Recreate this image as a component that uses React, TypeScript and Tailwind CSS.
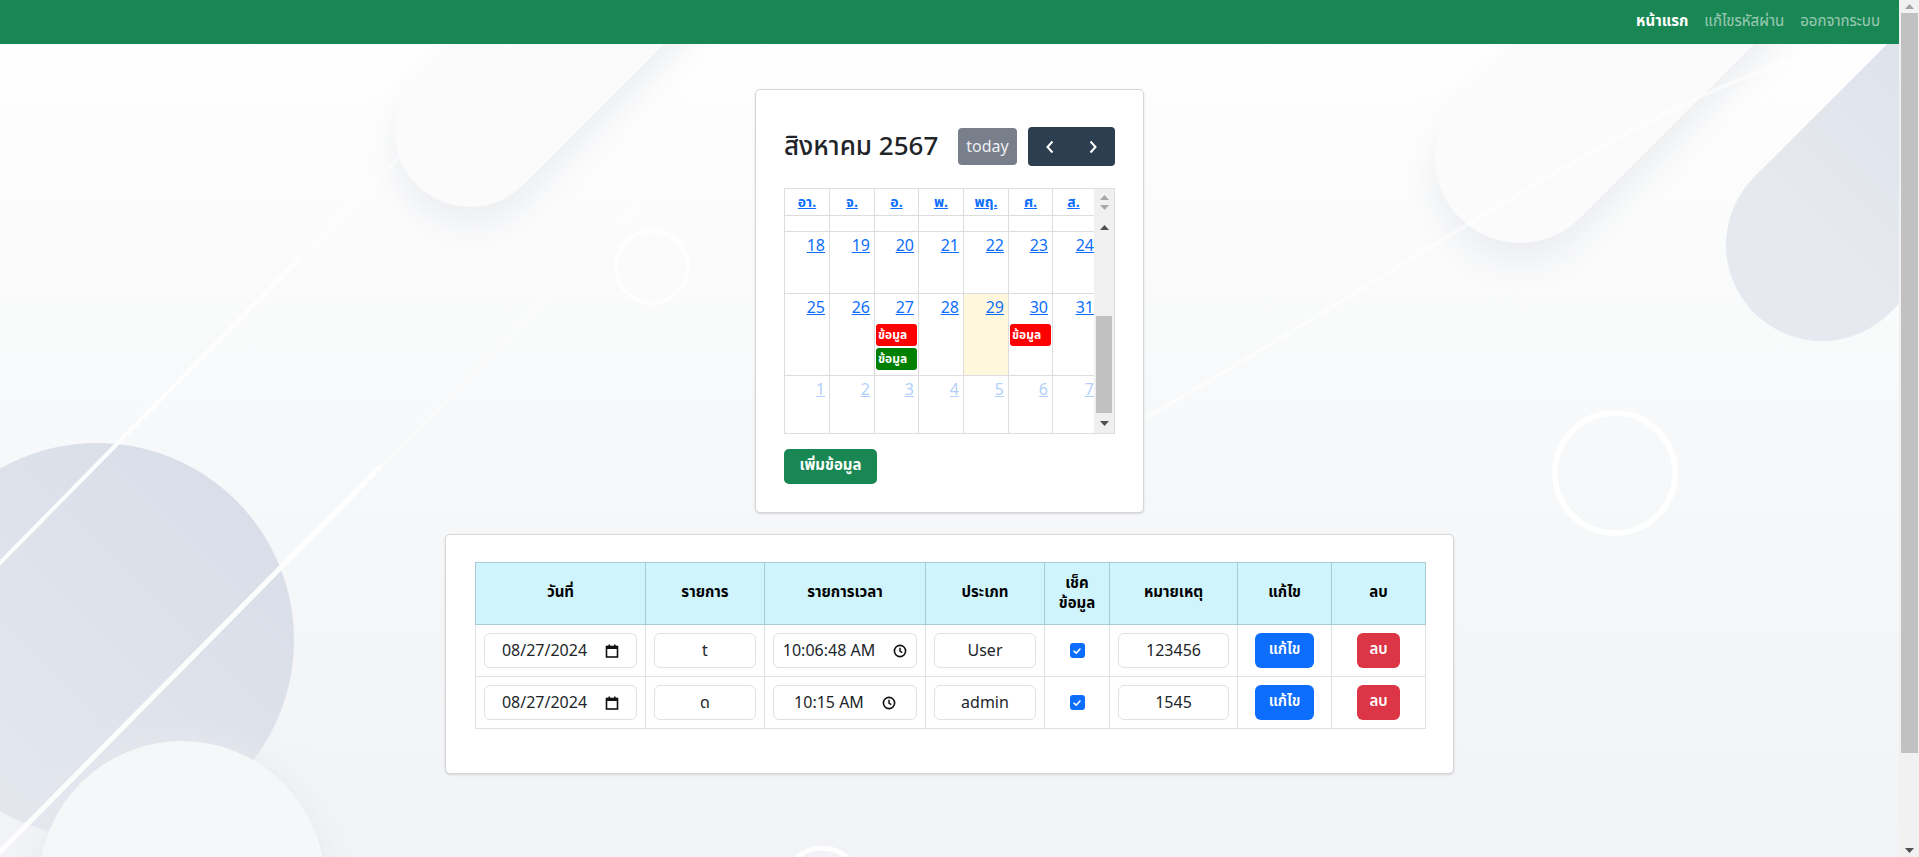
import React from 'react';

const FONT = '"Segoe UI", "Noto Sans Thai", "Noto Sans", "Liberation Sans", sans-serif';

const colW = ['w-[45px]', 'w-[45px]', 'w-[44px]', 'w-[45px]', 'w-[45px]', 'w-[44px]', 'w-[41px]'];
const dayNames = ['อา.', 'จ.', 'อ.', 'พ.', 'พฤ.', 'ศ.', 'ส.'];

type Ev = { color: string };
type Day = { n: number; other?: boolean; today?: boolean; events?: Ev[] };

const weeks: { h: string; days: Day[] }[] = [
  { h: 'h-[62px]', days: [18, 19, 20, 21, 22, 23, 24].map((n) => ({ n })) },
  {
    h: 'h-[82px]',
    days: [
      { n: 25 },
      { n: 26 },
      { n: 27, events: [{ color: 'bg-[#ff0000]' }, { color: 'bg-[#008000]' }] },
      { n: 28 },
      { n: 29, today: true },
      { n: 30, events: [{ color: 'bg-[#ff0000]' }] },
      { n: 31 },
    ],
  },
  { h: 'flex-1', days: [1, 2, 3, 4, 5, 6, 7].map((n) => ({ n, other: true })) },
];

function Tri({ up, color }: { up?: boolean; color: string }) {
  return (
    <svg width="9" height="5" viewBox="0 0 9 5">
      <path d={up ? 'M0 5 L4.5 0 L9 5 Z' : 'M0 0 L4.5 5 L9 0 Z'} fill={color} />
    </svg>
  );
}

function Background() {
  return (
    <svg className="absolute inset-0 w-full h-full" viewBox="0 0 1899 857" preserveAspectRatio="none">
      <defs>
        <linearGradient id="bg" x1="0" y1="0" x2="0" y2="1">
          <stop offset="0" stopColor="#ffffff" />
          <stop offset="0.45" stopColor="#f8f9fa" />
          <stop offset="1" stopColor="#f2f3f6" />
        </linearGradient>
        <linearGradient id="blob" x1="1" y1="0" x2="0" y2="1">
          <stop offset="0" stopColor="#d7dce7" />
          <stop offset="1" stopColor="#e6e9ef" />
        </linearGradient>
        <filter id="soft" filterUnits="userSpaceOnUse" x="-200" y="-300" width="2300" height="1400">
          <feGaussianBlur stdDeviation="16" />
        </filter>
      </defs>
      <rect width="1899" height="857" fill="url(#bg)" />
      {/* soft pills near top */}
      <line x1="470" y1="150" x2="640" y2="-20" stroke="#eceef1" strokeWidth="150" strokeLinecap="round" filter="url(#soft)" />
      <line x1="470" y1="132" x2="640" y2="-38" stroke="#fbfbfc" strokeWidth="150" strokeLinecap="round" />
      <line x1="1520" y1="178" x2="1720" y2="-22" stroke="#eceef1" strokeWidth="170" strokeLinecap="round" filter="url(#soft)" />
      <line x1="1520" y1="158" x2="1720" y2="-42" stroke="#fbfbfc" strokeWidth="170" strokeLinecap="round" />
      {/* blue pill top right */}
      <line x1="1822" y1="245" x2="2100" y2="-33" stroke="url(#blob)" strokeWidth="192" strokeLinecap="round" />
      {/* circles bottom left */}
      <circle cx="97" cy="640" r="197" fill="url(#blob)" />
      <circle cx="182" cy="884" r="143" fill="#e6e9ed" filter="url(#soft)" />
      <circle cx="182" cy="884" r="143" fill="#f6f7f9" />
      {/* white lines */}
      <line x1="-10" y1="573" x2="300" y2="258" stroke="#ffffff" strokeWidth="4" opacity="0.95" />
      <line x1="300" y1="258" x2="520" y2="34" stroke="#ffffff" strokeWidth="3" opacity="0.5" />
      <line x1="-10" y1="862" x2="380" y2="467" stroke="#ffffff" strokeWidth="5" opacity="0.95" />
      <line x1="380" y1="467" x2="640" y2="204" stroke="#ffffff" strokeWidth="3" opacity="0.45" />
      <path d="M1145 418 C1300 330 1420 250 1560 170 S1780 60 1860 40" stroke="#ffffff" strokeWidth="4" fill="none" opacity="0.55" />
      <circle cx="652" cy="267" r="36" stroke="#ffffff" strokeWidth="4" fill="none" opacity="0.8" />
      <circle cx="1615" cy="473" r="60" stroke="#ffffff" strokeWidth="6" fill="none" opacity="0.9" />
      <circle cx="822" cy="886" r="38" stroke="#ffffff" strokeWidth="5" fill="none" opacity="0.9" />
    </svg>
  );
}

function Calendar() {
  return (
    <div className="w-[389px] h-[424px] bg-white border border-[#d6d6d6] rounded-[5px] shadow-sm pt-[37px] px-[28px]">
      <div className="flex items-center justify-between w-[331px]">
        <div className="text-[26px] font-medium text-[#212529] leading-none">สิงหาคม 2567</div>
        <div className="flex items-center gap-[11px]">
          <div className="h-[37px] w-[59px] rounded-[4px] bg-[#787f8b] text-[#eceef0] text-[16px] flex items-center justify-center">
            today
          </div>
          <div className="h-[39px] w-[87px] rounded-[4px] bg-[#2c3e50] flex">
            <div className="flex-1 flex items-center justify-center">
              <svg width="10" height="14" viewBox="0 0 10 14">
                <path d="M7.5 1.5 L2.5 7 L7.5 12.5" stroke="#fff" strokeWidth="2" fill="none" />
              </svg>
            </div>
            <div className="flex-1 flex items-center justify-center">
              <svg width="10" height="14" viewBox="0 0 10 14">
                <path d="M2.5 1.5 L7.5 7 L2.5 12.5" stroke="#fff" strokeWidth="2" fill="none" />
              </svg>
            </div>
          </div>
        </div>
      </div>

      <div className="mt-[22px] flex border border-[#dddddd] w-[331px] h-[246px]">
        <div className="flex flex-col w-[309px]">
          <div className="flex h-[27px] border-b border-[#dddddd] shrink-0">
            {dayNames.map((d, i) => (
              <div
                key={d}
                className={`${colW[i]} ${i < 6 ? 'border-r border-[#dddddd]' : ''} flex items-center justify-center text-[14px] font-bold text-[#0d6efd] underline`}
              >
                {d}
              </div>
            ))}
          </div>
          <div className="flex h-[16px] border-b border-[#dddddd] shrink-0">
            {colW.map((w, i) => (
              <div key={i} className={`${w} ${i < 6 ? 'border-r border-[#dddddd]' : ''}`} />
            ))}
          </div>
          {weeks.map((wk, wi) => (
            <div key={wi} className={`flex ${wk.h} ${wi < 2 ? 'border-b border-[#dddddd] shrink-0' : ''}`}>
              {wk.days.map((d, i) => (
                <div
                  key={i}
                  className={`${colW[i]} ${i < 6 ? 'border-r border-[#dddddd]' : ''} ${d.today ? 'bg-[#fff8dd]' : ''} flex flex-col`}
                >
                  <div className={`flex justify-end pt-[4px] ${i === 6 ? 'pr-0' : 'pr-[4px]'}`}>
                    <span className={`text-[16px] leading-[20px] underline ${d.other ? 'text-[#b3cffb]' : 'text-[#0d6efd]'}`}>{d.n}</span>
                  </div>
                  {d.events && (
                    <div className="flex flex-col gap-[2px] mt-[6px] px-[1px]">
                      {d.events.map((e, k) => (
                        <div key={k} className={`${e.color} h-[22px] rounded-[3px] text-white text-[12px] font-bold leading-[22px] px-[2px]`}>
                          ข้อมูล
                        </div>
                      ))}
                    </div>
                  )}
                </div>
              ))}
            </div>
          ))}
        </div>
        <div className="flex-1 bg-[#f0f0f0] flex flex-col">
          <div className="h-[27px] flex flex-col items-center justify-center gap-[5px]">
            <Tri up color="#a8a8a8" />
            <Tri color="#a8a8a8" />
          </div>
          <div className="flex-1 flex flex-col items-center pt-[9px] pb-[7px]">
            <Tri up color="#505050" />
            <div className="flex-1 w-full flex flex-col justify-end pb-[8px] px-[2px]">
              <div className="h-[97px] bg-[#c1c1c1]" />
            </div>
            <Tri color="#505050" />
          </div>
        </div>
      </div>

      <div className="mt-[15px] h-[35px] w-[93px] rounded-[5px] bg-[#198754] text-white text-[15px] font-bold flex items-center justify-center">
        เพิ่มข้อมูล
      </div>
    </div>
  );
}

function Field({ value, icon }: { value: string; icon?: 'date' | 'time' }) {
  return (
    <div className="h-[35px] w-full rounded-[6px] border border-[#dee2e6] bg-white flex items-center justify-center gap-[18px] text-[16px] text-[#212529]">
      <span>{value}</span>
      {icon === 'date' && (
        <svg width="14" height="14" viewBox="0 0 14 14">
          <rect x="1.5" y="2.5" width="11" height="10.5" fill="none" stroke="#111" strokeWidth="1.6" />
          <rect x="1.5" y="2" width="11" height="3" fill="#111" />
          <rect x="3.5" y="0.5" width="1.6" height="2.5" fill="#111" />
          <rect x="9" y="0.5" width="1.6" height="2.5" fill="#111" />
        </svg>
      )}
      {icon === 'time' && (
        <svg width="14" height="14" viewBox="0 0 14 14">
          <circle cx="7" cy="7" r="5.6" fill="none" stroke="#111" strokeWidth="1.6" />
          <path d="M7 3.8 V7.2 L9.3 8.6" fill="none" stroke="#111" strokeWidth="1.5" />
        </svg>
      )}
    </div>
  );
}

function Check() {
  return (
    <div className="mx-auto w-[15px] h-[15px] rounded-[3px] bg-[#0d6efd] flex items-center justify-center">
      <svg width="10" height="10" viewBox="0 0 10 10">
        <path d="M2 5.2 L4.2 7.2 L8 3" stroke="#fff" strokeWidth="1.6" fill="none" strokeLinecap="round" strokeLinejoin="round" />
      </svg>
    </div>
  );
}

const rows = [
  { date: '08/27/2024', item: 't', time: '10:06:48 AM', type: 'User', note: '123456' },
  { date: '08/27/2024', item: 'ด', time: '10:15 AM', type: 'admin', note: '1545' },
];

function DataTable() {
  const th = 'border border-[#a9cbd3] bg-[#cff4fc] font-bold text-[15px] text-black px-2 align-middle';
  const td = 'border border-[#dee2e6] px-[8px] py-[8px] align-middle text-center';
  return (
    <div className="w-[1009px] bg-white border border-[#d6d6d6] rounded-[5px] shadow-sm pt-[27px] pb-[44px] px-[29px]">
      <table className="w-[950px] border-collapse table-fixed">
        <colgroup>
          <col className="w-[170px]" />
          <col className="w-[119px]" />
          <col className="w-[161px]" />
          <col className="w-[119px]" />
          <col className="w-[65px]" />
          <col className="w-[128px]" />
          <col className="w-[94px]" />
          <col className="w-[94px]" />
        </colgroup>
        <thead>
          <tr className="h-[62px]">
            <th className={th}>วันที่</th>
            <th className={th}>รายการ</th>
            <th className={th}>รายการเวลา</th>
            <th className={th}>ประเภท</th>
            <th className={`${th} leading-[20px]`}>
              เช็ค
              <br />
              ข้อมูล
            </th>
            <th className={th}>หมายเหตุ</th>
            <th className={th}>แก้ไข</th>
            <th className={th}>ลบ</th>
          </tr>
        </thead>
        <tbody>
          {rows.map((r, i) => (
            <tr key={i}>
              <td className={td}>
                <Field value={r.date} icon="date" />
              </td>
              <td className={td}>
                <Field value={r.item} />
              </td>
              <td className={td}>
                <Field value={r.time} icon="time" />
              </td>
              <td className={td}>
                <Field value={r.type} />
              </td>
              <td className={td}>
                <Check />
              </td>
              <td className={td}>
                <Field value={r.note} />
              </td>
              <td className={td}>
                <div className="mx-auto h-[35px] w-[59px] rounded-[6px] bg-[#0d6efd] text-white text-[15px] font-semibold flex items-center justify-center">
                  แก้ไข
                </div>
              </td>
              <td className={td}>
                <div className="mx-auto h-[35px] w-[43px] rounded-[6px] bg-[#dc3545] text-white text-[15px] font-semibold flex items-center justify-center">
                  ลบ
                </div>
              </td>
            </tr>
          ))}
        </tbody>
      </table>
    </div>
  );
}

export default function App() {
  return (
    <div className="h-[857px] w-full flex overflow-hidden" style={{ fontFamily: FONT }}>
      <div className="flex-1 relative overflow-hidden">
        <Background />
        <nav className="relative h-[44px] bg-[#198754] flex items-center justify-end pr-[19px] gap-[16px] text-[15px]">
          <span className="text-white font-bold">หน้าแรก</span>
          <span className="text-white/55">แก้ไขรหัสผ่าน</span>
          <span className="text-white/55">ออกจากระบบ</span>
        </nav>
        <main className="relative flex flex-col items-center pt-[45px] gap-[21px]">
          <Calendar />
          <DataTable />
        </main>
      </div>
      <div className="w-[20px] bg-[#f1f1f1] flex flex-col items-center py-[4px]">
        <Tri up color="#a3a3a3" />
        <div className="w-[17px] h-[740px] bg-[#c1c1c1] mt-[4px]" />
        <div className="flex-1" />
        <Tri color="#505050" />
      </div>
    </div>
  );
}
